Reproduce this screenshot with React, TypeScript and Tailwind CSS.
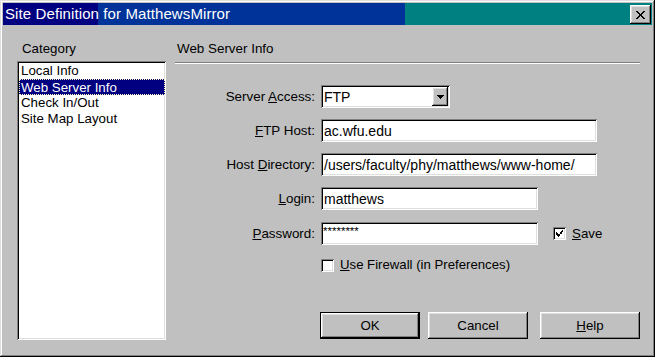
import React from "react";

const raised =
  "shadow-[inset_-1px_-1px_#000,inset_1px_1px_#fff,inset_-2px_-2px_#808080,inset_2px_2px_#dfdfdf]";
const sunken =
  "shadow-[inset_1px_1px_#808080,inset_-1px_-1px_#fff,inset_2px_2px_#000,inset_-2px_-2px_#dfdfdf]";

function Label({ children }: { children: React.ReactNode }) {
  return <div className="w-[140px] text-right leading-[16px] shrink-0 text-[13.4px]">{children}</div>;
}

function Field({ w, children }: { w: string; children?: React.ReactNode }) {
  return (
    <div className={`ml-[6px] h-[23px] bg-white ${sunken} ${w} flex items-center pl-[3px] leading-[16px] whitespace-nowrap overflow-hidden`}>
      {children}
    </div>
  );
}

function CheckBox({ checked }: { checked?: boolean }) {
  return (
    <div className={`w-[13px] h-[13px] bg-white ${sunken} shrink-0 relative`}>
      {checked && (
        <svg width="13" height="13" viewBox="0 0 13 13" className="absolute left-0 top-0" shapeRendering="crispEdges">
          <path d="M3 5h1v1h-1zM3 6h2v1h-2zM3 7h3v1h-3zM4 8h3v1h-3zM5 9h1v1h-1zM6 7h1v1h-1zM7 6h1v1h-1zM7 5h2v1h-2zM8 4h1v1h-1zM9 3h1v1h-1zM8 5h1v2h-1zM9 4h1v1h-1z" fill="#000" />
        </svg>
      )}
    </div>
  );
}

function Button({ children, def, w }: { children: React.ReactNode; def?: boolean; w: string }) {
  if (def) {
    return (
      <div className={`${w} h-[27px] border border-black`}>
        <div className={`w-full h-full ${raised} flex items-center justify-center leading-[16px]`}>{children}</div>
      </div>
    );
  }
  return (
    <div className={`${w} h-[27px] ${raised} flex items-center justify-center leading-[16px]`}>{children}</div>
  );
}

export default function App() {
  return (
    <div
      className="w-[655px] h-[357px] bg-[#c0c0c0] p-[3px] flex flex-col text-black text-[14px] shadow-[inset_-1px_-1px_#000,inset_1px_1px_#dfdfdf,inset_-2px_-2px_#808080,inset_2px_2px_#fff] overflow-hidden"
      style={{ fontFamily: '"Liberation Sans", Arial, sans-serif' }}
    >
      {/* Title bar */}
      <div className="h-[22px] shrink-0 flex items-center bg-[linear-gradient(to_right,#000080_0px,#000080_95px,#003399_95px,#003399_402px,#008080_402px,#008080_100%)]">
        <div className="pl-[2px] text-white text-[15px] tracking-[0.1px] leading-[16px] whitespace-nowrap">Site Definition for MatthewsMirror</div>
        <div className={`ml-auto mr-[1px] mt-[1px] w-[21px] h-[19px] bg-[#c0c0c0] ${raised} flex items-center justify-center`}>
          <svg width="9" height="8" viewBox="0 0 9 8" shapeRendering="crispEdges">
            <path d="M0 0h2v1h-2zM7 0h2v1h-2zM1 1h2v1h-2zM6 1h2v1h-2zM2 2h2v1h-2zM5 2h2v1h-2zM3 3h3v1h-3zM3 4h3v1h-3zM2 5h2v1h-2zM5 5h2v1h-2zM1 6h2v1h-2zM6 6h2v1h-2zM0 7h2v1h-2zM7 7h2v1h-2z" fill="#000" />
          </svg>
        </div>
      </div>

      {/* Body */}
      <div className="flex pl-[14px] pt-[16px] pr-[15px]">
        {/* Left column */}
        <div className="w-[149px] shrink-0 flex flex-col text-[13.3px]">
          <div className="h-[16px] leading-[16px] pl-[5px]">Category</div>
          <div className={`mt-[4px] h-[279px] bg-white ${sunken} pt-[2px] pl-[2px] pr-[1px]`}>
            <div className="h-[16px] leading-[16px] pl-[2px]">Local Info</div>
            <div className="h-[16px] leading-[15px] bg-[#000080] text-white border border-dotted border-[#ffffc0] pl-[1px]">Web Server Info</div>
            <div className="h-[16px] leading-[16px] pl-[2px]">Check In/Out</div>
            <div className="h-[16px] leading-[16px] pl-[2px]">Site Map Layout</div>
          </div>
        </div>

        {/* Right column */}
        <div className="ml-[9px] flex-1 flex flex-col">
          <div className="h-[16px] leading-[16px] pl-[2px] text-[13.4px]">Web Server Info</div>
          <div className="mt-[5px] h-[2px] border-t border-[#808080] border-b border-b-white"></div>

          <div className="mt-[21px] flex items-center">
            <Label>
              Server <u>A</u>ccess:
            </Label>
            <div className={`ml-[6px] h-[23px] w-[129px] bg-white ${sunken} flex items-center pl-[3px] pr-[2px]`}>
              <span className="leading-[16px]">FTP</span>
              <div className={`ml-auto w-[16px] h-[19px] bg-[#c0c0c0] ${raised} flex items-center justify-center`}>
                <svg width="7" height="4" viewBox="0 0 7 4" shapeRendering="crispEdges">
                  <path d="M0 0h7v1h-7zM1 1h5v1h-5zM2 2h3v1h-3zM3 3h1v1h-1z" fill="#000" />
                </svg>
              </div>
            </div>
          </div>

          <div className="mt-[11px] flex items-center">
            <Label>
              <u>F</u>TP Host:
            </Label>
            <Field w="w-[276px]">ac.wfu.edu</Field>
          </div>

          <div className="mt-[11px] flex items-center">
            <Label>
              Host <u>D</u>irectory:
            </Label>
            <Field w="w-[276px]">/users/faculty/phy/matthews/www-home/</Field>
          </div>

          <div className="mt-[11px] flex items-center">
            <Label>
              <u>L</u>ogin:
            </Label>
            <Field w="w-[217px]">matthews</Field>
          </div>

          <div className="mt-[12px] flex items-center">
            <Label>
              <u>P</u>assword:
            </Label>
            <div className={`ml-[6px] h-[23px] w-[217px] bg-white ${sunken} pl-[2px] pt-[4px] text-[11.5px] leading-[10px]`}>
              ********
            </div>
            <div className="ml-[15px] flex items-center">
              <CheckBox checked />
              <span className="ml-[6px] leading-[16px] text-[13.3px]">
                <u>S</u>ave
              </span>
            </div>
          </div>

          <div className="mt-[12px] h-[16px] flex items-center pl-[146px]">
            <CheckBox />
            <span className="ml-[6px] leading-[16px] text-[13.2px]">
              <u>U</u>se Firewall (in Preferences)
            </span>
          </div>

          <div className="mt-[39px] flex pl-[145px] text-[13.3px]">
            <Button def w="w-[100px]">OK</Button>
            <div className="ml-[8px]">
              <Button w="w-[100px]">Cancel</Button>
            </div>
            <div className="ml-[12px]">
              <Button w="w-[100px]">
                <span>
                  <u>H</u>elp
                </span>
              </Button>
            </div>
          </div>
        </div>
      </div>
    </div>
  );
}
